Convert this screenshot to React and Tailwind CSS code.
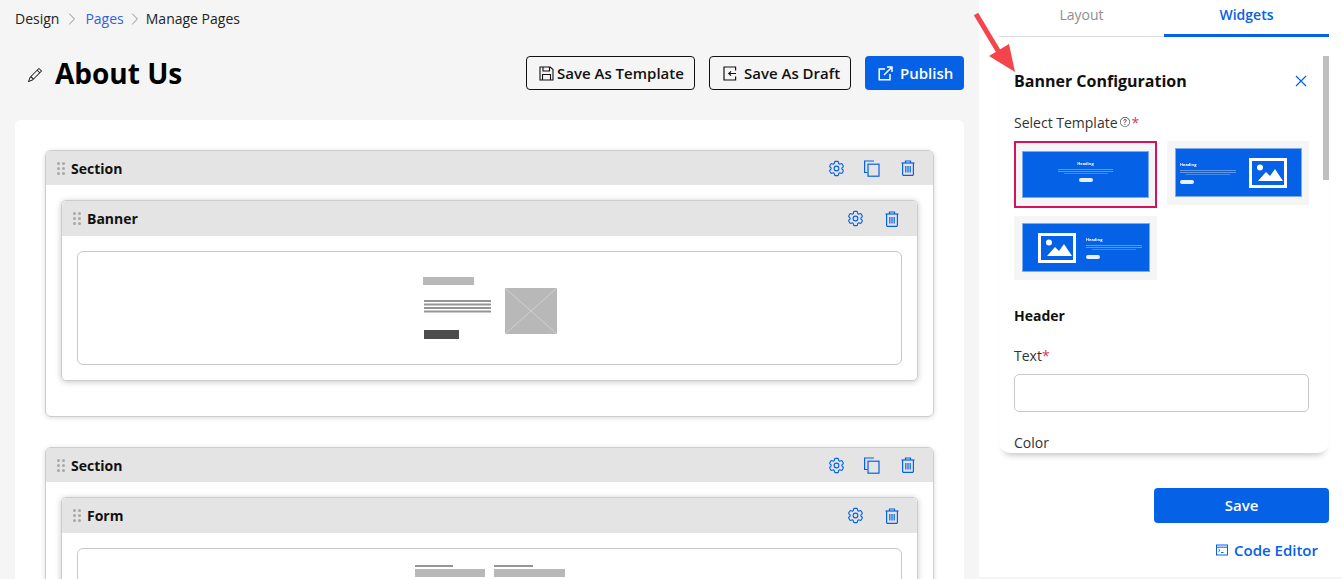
import React from "react";
import { ChevronRight } from "lucide-react";
import { BsPencil, BsQuestionCircle } from "react-icons/bs";
import { HiOutlineCog6Tooth } from "react-icons/hi2";

function Dots() {
  return (
    <div className="grid grid-cols-2 gap-x-[2px] gap-y-[2px] w-[8px] shrink-0">
      {[0, 1, 2, 3, 4, 5].map((i) => (
        <span key={i} className="w-[3px] h-[3px] rounded-full bg-[#a8a8a8]" />
      ))}
    </div>
  );
}

function CopyIcon() {
  return (
    <svg width="17" height="17" viewBox="0 0 17 17" fill="none" stroke="#0561e5" strokeWidth="1.2">
      <path d="M11 1H1.6v11.5H4.5" />
      <rect x="5" y="4.2" width="11" height="12" />
    </svg>
  );
}

function TrashIcon() {
  return (
    <svg width="14" height="16" viewBox="0 0 14 16" fill="none" stroke="#0561e5" strokeWidth="1.2">
      <path d="M0.5 3h13" />
      <path d="M4.5 3V1h5v2" />
      <path d="M1.6 3v11.2a1.2 1.2 0 0 0 1.2 1.2h8.4a1.2 1.2 0 0 0 1.2-1.2V3" />
      <path d="M4.8 6v6.5M7 6v6.5M9.2 6v6.5" />
    </svg>
  );
}

function Gear() {
  return <HiOutlineCog6Tooth className="text-[#0561e5] w-[19px] h-[19px]" strokeWidth={1.4} />;
}

function SaveIcon() {
  return (
    <svg width="15" height="15" viewBox="0 0 15 15" fill="none" stroke="#111" strokeWidth="1.1">
      <path d="M1 1h10.2L14 3.6V14H1z" />
      <path d="M4 1v4h6.5V1M3.5 14V8.5h8V14" />
    </svg>
  );
}

function DraftIcon() {
  return (
    <svg width="14" height="15" viewBox="0 0 14 15" fill="none" stroke="#111" strokeWidth="1.2">
      <path d="M12.6 4.5V1H1v13h11.6v-3.5" />
      <path d="M13 7.5H6M8 5.3 5.8 7.5 8 9.7" />
    </svg>
  );
}

function PublishIcon() {
  return (
    <svg width="15" height="15" viewBox="0 0 15 15" fill="none" stroke="#fff" strokeWidth="1.5">
      <path d="M7 3H1.2v10.8H12V8" />
      <path d="M9 1h5v5M14 1 6 9" />
    </svg>
  );
}

function CodeIcon() {
  return (
    <svg width="12" height="12" viewBox="0 0 12 12" fill="none" stroke="#0561e5" strokeWidth="1">
      <rect x="0.5" y="1" width="11" height="10" />
      <path d="M0.5 3.2h11" />
      <path d="M2.5 5.2 4 6.4 2.5 7.6M5 8.5h2.5" />
    </svg>
  );
}

function CloseIcon() {
  return (
    <svg width="12" height="12" viewBox="0 0 12 12" fill="none" stroke="#0561e5" strokeWidth="1.2" className="mr-[2px]">
      <path d="M1 1l10 10M11 1 1 11" />
    </svg>
  );
}

function Header({ title, copy, tall }) {
  return (
    <div className={`flex items-center bg-[#e4e4e4] rounded-t-[5px] pl-[11px] ${tall ? "h-[35px]" : "h-[34px]"}`}>
      <Dots />
      <span className="ml-[6px] text-[14px] font-bold text-[#111]">{title}</span>
      <div className="ml-auto flex items-center">
        {copy ? (
          <>
            <span className="flex w-[19px] justify-center"><Gear /></span>
            <span className="ml-[16px] flex w-[19px] justify-center"><CopyIcon /></span>
            <span className="ml-[17px] mr-[16px] flex w-[19px] justify-center"><TrashIcon /></span>
          </>
        ) : (
          <>
            <span className="flex w-[19px] justify-center"><Gear /></span>
            <span className="ml-[17px] mr-[16px] flex w-[19px] justify-center"><TrashIcon /></span>
          </>
        )}
      </div>
    </div>
  );
}

function BannerArt() {
  return (
    <svg width="136" height="64" viewBox="0 0 136 64" className="block">
      <rect x="0" y="0" width="51" height="8" fill="#b8b8b8" />
      <rect x="1" y="23" width="67" height="2" fill="#959595" />
      <rect x="1" y="26.5" width="67" height="2" fill="#959595" />
      <rect x="1" y="30" width="67" height="2" fill="#959595" />
      <rect x="1" y="33.5" width="67" height="2" fill="#959595" />
      <rect x="1" y="53" width="35" height="9" fill="#4d4d4d" />
      <rect x="82" y="11" width="52" height="46" fill="#b8b8b8" />
      <path d="M82 11l52 46M134 11L82 57" stroke="#d6d6d6" strokeWidth="0.8" />
    </svg>
  );
}

function FormArt() {
  return (
    <svg width="150" height="13" viewBox="0 0 150 13" className="block">
      <rect x="0" y="0" width="38" height="2" fill="#959595" />
      <rect x="0" y="4" width="70" height="8" fill="#b8b8b8" />
      <rect x="79" y="0" width="39" height="2" fill="#959595" />
      <rect x="79" y="4" width="71" height="8" fill="#b8b8b8" />
    </svg>
  );
}

function PictureGlyph() {
  return (
    <svg width="38" height="30" viewBox="0 0 38 30" className="shrink-0">
      <rect x="1.5" y="1.5" width="35" height="27" fill="none" stroke="#fff" strokeWidth="3" />
      <circle cx="11" cy="9.5" r="3" fill="#fff" />
      <path d="M9 23l8-9 4 4 5-7 8 12z" fill="#fff" />
    </svg>
  );
}

function Lines({ w }) {
  return (
    <div className="flex flex-col gap-[1px] items-center">
      <span className="h-[1px] bg-white/35 block" style={{ width: w }} />
      <span className="h-[1px] bg-white/35 block" style={{ width: w }} />
      <span className="h-[1px] bg-white/25 block" style={{ width: w * 0.8 }} />
    </div>
  );
}

function Pill() {
  return <span className="block w-[14px] h-[4px] rounded-full bg-white/90" />;
}

function Heading() {
  return <span className="text-[4px] leading-[5px] font-bold text-white">Heading</span>;
}

export default function App() {
  return (
    <div className="relative w-[1342px] h-[579px] overflow-hidden flex bg-[#f5f5f5] text-[#111] font-['Open_Sans','Noto_Sans',sans-serif]">
      {/* Left column */}
      <div className="w-[979px] shrink-0 px-[15px]">
        <div className="flex items-center h-[37px] text-[14px] text-[#222]">
          <span>Design</span>
          <ChevronRight className="w-[20px] h-[20px] mx-[3px] text-[#777]" strokeWidth={1} />
          <span className="text-[#2f62e0]">Pages</span>
          <ChevronRight className="w-[20px] h-[20px] mx-[1px] text-[#777]" strokeWidth={1} />
          <span>Manage Pages</span>
        </div>
        <div className="flex items-center h-[34px] mt-[19px]">
          <BsPencil className="ml-[13px] w-[14px] h-[14px] mt-[4px] text-[#111]" />
          <h1 className="ml-[13px] text-[28px] font-bold text-black leading-none">About Us</h1>
          <div className="ml-auto flex items-center gap-[14px]">
            <button className="h-[34px] w-[169px] flex items-center pl-[12px] gap-[3px] border border-[#111] rounded-[4px] text-[15px] font-semibold text-[#111]">
              <SaveIcon />
              <span>Save As Template</span>
            </button>
            <button className="h-[34px] w-[142px] flex items-center pl-[13px] gap-[7px] border border-[#111] rounded-[4px] text-[15px] font-semibold text-[#111]">
              <DraftIcon />
              <span>Save As Draft</span>
            </button>
            <button className="h-[34px] w-[99px] flex items-center pl-[13px] gap-[7px] bg-[#0561e5] rounded-[4px] text-[15px] font-semibold text-white">
              <PublishIcon />
              <span>Publish</span>
            </button>
          </div>
        </div>
        <div className="mt-[30px] bg-white rounded-t-[6px] px-[30px] pt-[30px] h-[600px]">
          <section className="border border-[#cdcdcd] rounded-[6px] shadow-[0_1px_5px_rgba(0,0,0,0.15)] h-[267px]">
            <Header title="Section" copy />
            <div className="px-[15px] pt-[15px]">
              <div className="border border-[#cdcdcd] rounded-[5px] shadow-[0_1px_6px_rgba(0,0,0,0.22)] h-[181px]">
                <Header title="Banner" tall />
                <div className="mx-[15px] mt-[15px] h-[114px] border border-[#c8c8c8] rounded-[6px] flex justify-center pt-[25px] pl-[3px]">
                  <BannerArt />
                </div>
              </div>
            </div>
          </section>
          <section className="mt-[30px] border border-[#cdcdcd] rounded-[6px] shadow-[0_1px_5px_rgba(0,0,0,0.15)] h-[267px]">
            <Header title="Section" copy />
            <div className="px-[15px] pt-[15px]">
              <div className="border border-[#cdcdcd] rounded-[5px] shadow-[0_1px_6px_rgba(0,0,0,0.22)] h-[181px]">
                <Header title="Form" tall />
                <div className="mx-[15px] mt-[15px] h-[114px] border border-[#c8c8c8] rounded-[6px] flex justify-center pt-[16px] pl-[1px]">
                  <FormArt />
                </div>
              </div>
            </div>
          </section>
        </div>
      </div>

      {/* Right panel */}
      <aside className="w-[363px] h-[577px] shrink-0 bg-white pl-[20px] pr-[13px]">
        <div className="flex h-[37px] text-[14px]">
          <div className="w-[165px] text-center text-[#8f8f8f] border-b border-[#dcdcdc] pt-[4px]">Layout</div>
          <div className="w-[165px] text-center font-semibold text-[#0561e5] border-b-[3px] border-[#0561e5] pt-[4px]">Widgets</div>
        </div>
        <div className="relative mt-[18px] h-[398px] overflow-hidden rounded-b-[12px] bg-white shadow-[0_7px_6px_-5px_rgba(0,0,0,0.25)] pl-[15px] pr-[20px]">
          <span className="absolute right-0 top-[1px] w-[6px] h-[124px] bg-[#bfbfbf]" />
          <div className="flex items-center justify-between pt-[15px] h-[37px]">
            <h2 className="text-[16px] font-bold text-[#111]">Banner Configuration</h2>
            <CloseIcon />
          </div>
          <div className="flex items-center mt-[20px] h-[20px] text-[14px] text-[#333]">
            <span>Select Template</span>
            <BsQuestionCircle className="w-[10px] h-[10px] ml-[2px] text-[#444]" />
            <span className="text-[#d9385e] ml-[2px]">*</span>
          </div>
          <div className="mt-[9px] flex flex-wrap gap-x-[10px] gap-y-[8px] w-[296px]">
            <div className="w-[143px] h-[67px] border-2 border-[#d9105c] bg-[#f5f5f5] px-[6px] pt-[8px]">
              <div className="h-[47px] bg-[#0561e5] border border-[#7faaf0] flex flex-col items-center pt-[9px] blur-[0.3px]">
                <Heading />
                <div className="mt-[3px]"><Lines w={55} /></div>
                <div className="mt-[4px]"><Pill /></div>
              </div>
            </div>
            <div className="w-[142px] h-[64px] bg-[#f5f5f5] pl-[8px] pr-[7px] pt-[7px]">
              <div className="h-[49px] bg-[#0561e5] border border-[#7faaf0] flex items-center pl-[4px] pr-[14px] justify-between blur-[0.3px]">
                <div className="flex flex-col items-start">
                  <Heading />
                  <div className="mt-[3px]"><Lines w={56} /></div>
                  <div className="mt-[5px]"><Pill /></div>
                </div>
                <PictureGlyph />
              </div>
            </div>
            <div className="w-[143px] h-[64px] bg-[#f5f5f5] pl-[8px] pr-[7px] pt-[7px]">
              <div className="h-[49px] bg-[#0561e5] border border-[#7faaf0] flex items-center pl-[15px] gap-[10px] blur-[0.3px]">
                <PictureGlyph />
                <div className="flex flex-col items-start">
                  <Heading />
                  <div className="mt-[3px]"><Lines w={56} /></div>
                  <div className="mt-[5px]"><Pill /></div>
                </div>
              </div>
            </div>
          </div>
          <div className="mt-[26px] text-[14px] font-bold text-[#111] leading-[20px]">Header</div>
          <div className="mt-[20px] text-[14px] text-[#333] leading-[20px]">
            Text<span className="text-[#d9385e]">*</span>
          </div>
          <div className="mt-[8px] h-[38px] w-[295px] border border-[#c8c8c8] rounded-[5px]" />
          <div className="mt-[21px] text-[14px] text-[#333] leading-[20px]">Color</div>
        </div>
        <button className="block mt-[35px] ml-[155px] w-[175px] h-[35px] bg-[#0561e5] rounded-[4px] text-white text-[15px] font-semibold">
          Save
        </button>
        <div className="mt-[17px] ml-[155px] w-[164px] flex items-center justify-end gap-[6px] text-[15px] font-semibold text-[#0561e5] leading-[20px]">
          <CodeIcon />
          <span>Code Editor</span>
        </div>
      </aside>

      {/* Annotation arrow */}
      <svg className="absolute left-[972px] top-[10px]" width="48" height="64" viewBox="0 0 48 64">
        <path d="M4 4 L31 49" stroke="#f4444c" strokeWidth="5" />
        <path d="M43 62 L17 46 L37 34 Z" fill="#f4444c" />
      </svg>
    </div>
  );
}
